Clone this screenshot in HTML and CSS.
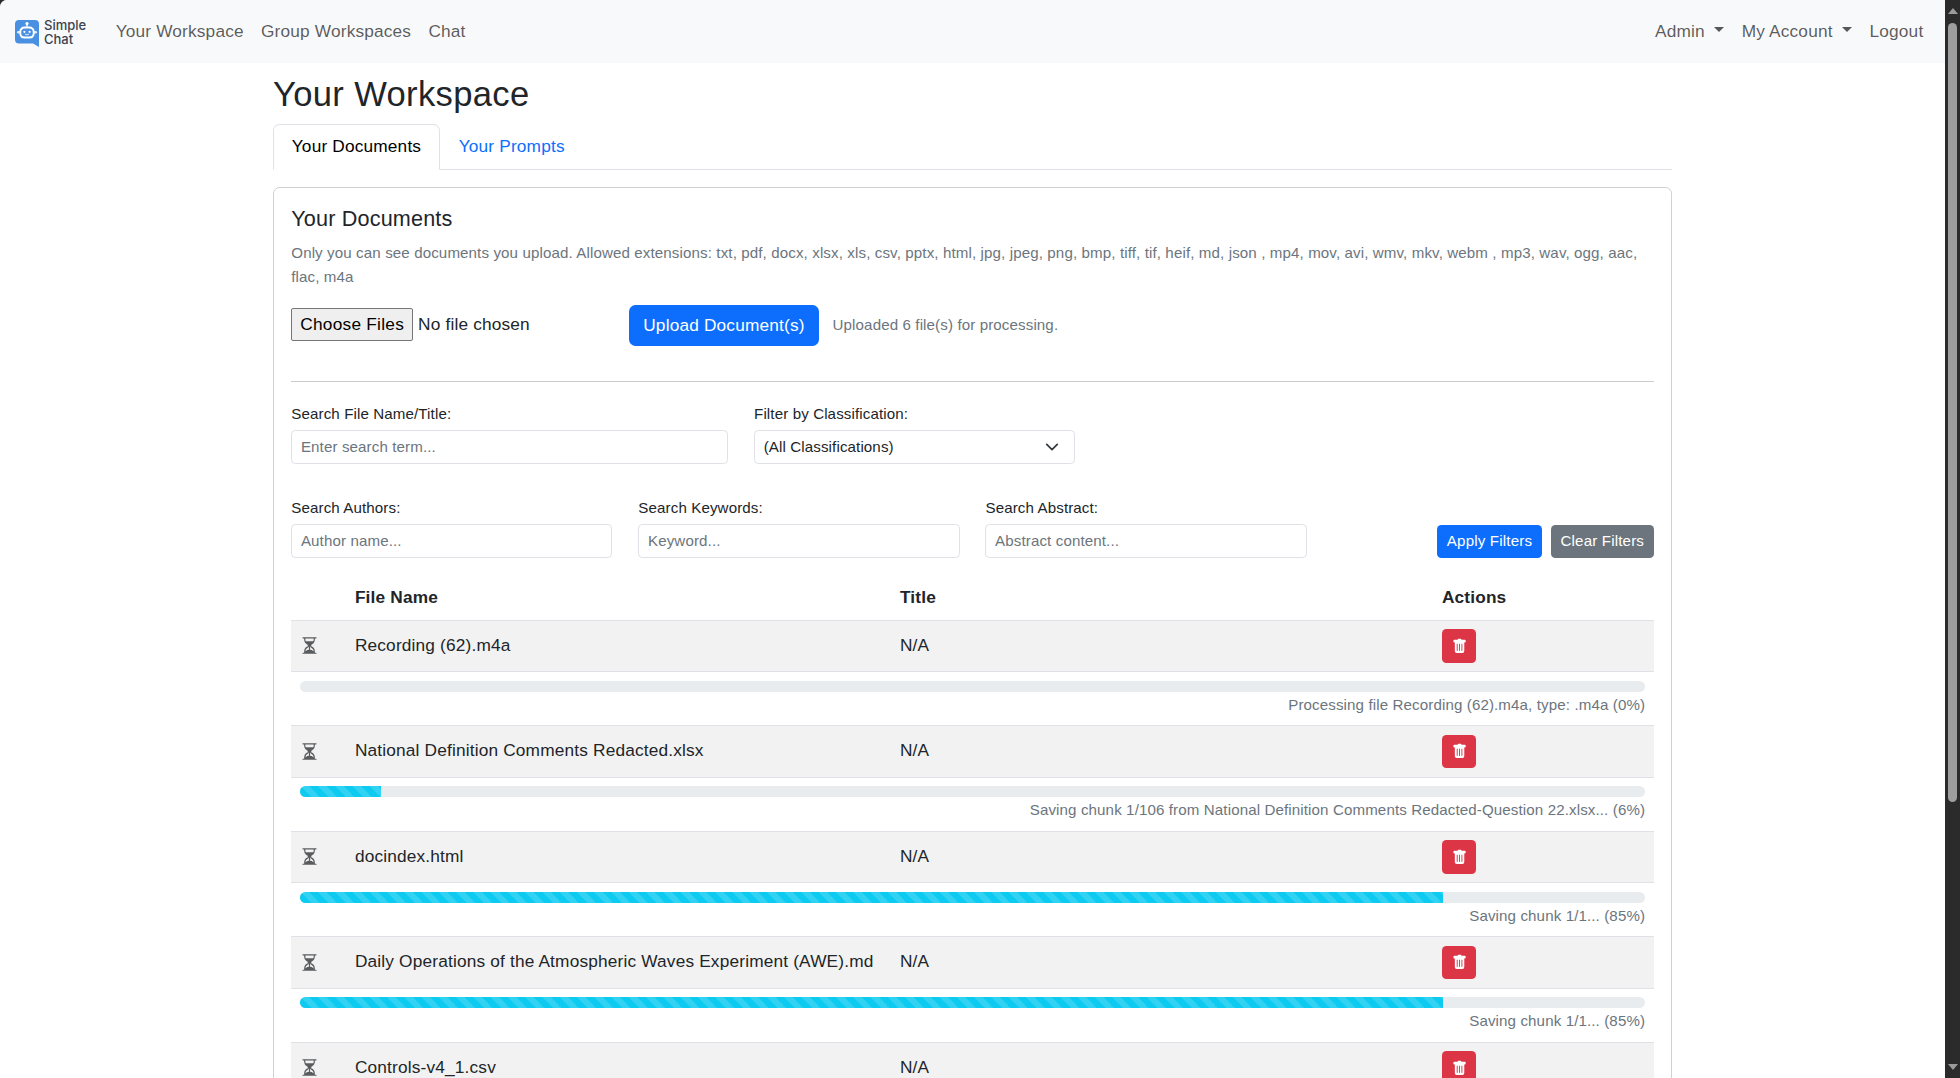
FILE: index.html
```html
<!DOCTYPE html>
<html lang="en">
<head>
    <meta charset="UTF-8">
    <meta name="viewport" content="width=device-width, initial-scale=1.0">
    <title>Your Workspace</title>
    <link rel="stylesheet" href="styles.css">
</head>
<body>
    <div class="window">
        <div class="page">
            <nav class="navbar">
                <a class="brand" href="#">
                    <svg class="brand-logo" viewBox="0 0 26 29" aria-hidden="true">
                        <path fill="#4a90e2" d="M5 1h16a4 4 0 0 1 4 4v23l-6-3.6H5a4 4 0 0 1-4-4V5a4 4 0 0 1 4-4z"/>
                        <circle cx="13" cy="4.6" r="1.6" fill="#fff"/>
                        <rect x="12.4" y="5" width="1.2" height="3" fill="#fff"/>
                        <rect x="3" y="12" width="20" height="2.4" rx="1.2" fill="#fff" opacity=".8" />
                        <rect x="5.4" y="7.6" width="15.2" height="12" rx="5" fill="#fff"/>
                        <rect x="7.2" y="9.6" width="11.6" height="8" rx="3.6" fill="#4a90e2"/>
                        <circle cx="10.4" cy="12.8" r="1.1" fill="#fff"/>
                        <circle cx="15.6" cy="12.8" r="1.1" fill="#fff"/>
                        <path d="M11.2 15.2c.9.8 2.7.8 3.6 0" fill="none" stroke="#fff" stroke-width=".8" stroke-linecap="round"/>
                    </svg>
                    <span class="brand-name">Simple<br>Chat</span>
                </a>
                <ul class="nav-list">
                    <li><a class="nav-link" href="#">Your Workspace</a></li>
                    <li><a class="nav-link" href="#">Group Workspaces</a></li>
                    <li><a class="nav-link" href="#">Chat</a></li>
                </ul>
                <ul class="nav-list nav-right">
                    <li><a class="nav-link caret" href="#">Admin</a></li>
                    <li><a class="nav-link caret" href="#">My Account</a></li>
                    <li><a class="nav-link" href="#">Logout</a></li>
                </ul>
            </nav>

            <main class="container">
                <h2 class="page-title">Your Workspace</h2>
                <ul class="tabs">
                    <li><a class="tab active" href="#">Your Documents</a></li>
                    <li><a class="tab" href="#">Your Prompts</a></li>
                </ul>

                <section class="card">
                    <h5 class="card-title">Your Documents</h5>
                    <p class="muted-note">Only you can see documents you upload. Allowed extensions: txt, pdf, docx, xlsx, xls, csv, pptx, html, jpg, jpeg, png, bmp, tiff, tif, heif, md, json , mp4, mov, avi, wmv, mkv, webm , mp3, wav, ogg, aac, flac, m4a</p>

                    <div class="upload-row">
                        <input class="file-input" type="file" multiple>
                        <button class="btn btn-primary">Upload Document(s)</button>
                        <span class="upload-status">Uploaded 6 file(s) for processing.</span>
                    </div>

                    <hr class="divider">

                    <div class="filters">
                        <div class="field span-4">
                            <label class="field-label">Search File Name/Title:</label>
                            <input class="field-input" type="text" placeholder="Enter search term...">
                        </div>
                        <div class="field span-3">
                            <label class="field-label">Filter by Classification:</label>
                            <div class="field-input select-box">(All Classifications)
                                <svg class="select-arrow" viewBox="0 0 16 16"><path fill="none" stroke="#343a40" stroke-linecap="round" stroke-linejoin="round" stroke-width="2" d="m2 5 6 6 6-6"/></svg>
                            </div>
                        </div>
                    </div>

                    <div class="filters filters-second">
                        <div class="field span-3">
                            <label class="field-label">Search Authors:</label>
                            <input class="field-input" type="text" placeholder="Author name...">
                        </div>
                        <div class="field span-3">
                            <label class="field-label">Search Keywords:</label>
                            <input class="field-input" type="text" placeholder="Keyword...">
                        </div>
                        <div class="field span-3">
                            <label class="field-label">Search Abstract:</label>
                            <input class="field-input" type="text" placeholder="Abstract content...">
                        </div>
                        <div class="filter-actions span-3">
                            <button class="btn btn-sm btn-primary">Apply Filters</button>
                            <button class="btn btn-sm btn-secondary">Clear Filters</button>
                        </div>
                    </div>

                    <table class="doc-table">
                        <colgroup>
                            <col class="col-icon">
                            <col class="col-name">
                            <col class="col-title">
                            <col>
                        </colgroup>
                        <thead>
                            <tr><th></th><th>File Name</th><th>Title</th><th>Actions</th></tr>
                        </thead>
                        <tbody id="docRows"></tbody>
                    </table>
                </section>
            </main>
        </div>

        <aside class="scrollbar">
            <span class="scroll-up"></span>
            <span class="scroll-thumb"></span>
            <span class="scroll-down"></span>
        </aside>
    </div>

    <script>
        const docs = [
            { name: "Recording (62).m4a", pct: 0, status: "Processing file Recording (62).m4a, type: .m4a" },
            { name: "National Definition Comments Redacted.xlsx", pct: 6, status: "Saving chunk 1/106 from National Definition Comments Redacted-Question 22.xlsx..." },
            { name: "docindex.html", pct: 85, status: "Saving chunk 1/1..." },
            { name: "Daily Operations of the Atmospheric Waves Experiment (AWE).md", pct: 85, status: "Saving chunk 1/1..." },
            { name: "Controls-v4_1.csv", pct: 85, status: "Saving chunk 1/1..." }
        ];

        const hourglass = '<svg class="row-icon" viewBox="0 0 16 16"><path fill="currentColor" d="M2.5 15a.5.5 0 1 1 0-1h1v-1a4.5 4.5 0 0 1 2.557-4.06c.29-.139.443-.377.443-.59v-.7c0-.213-.154-.451-.443-.59A4.5 4.5 0 0 1 3.5 3V2h-1a.5.5 0 0 1 0-1h11a.5.5 0 0 1 0 1h-1v1a4.5 4.5 0 0 1-2.557 4.06c-.29.139-.443.377-.443.59v.7c0 .213.154.451.443.59A4.5 4.5 0 0 1 12.5 13v1h1a.5.5 0 0 1 0 1zm2-13v1c0 .537.12 1.045.337 1.5h6.326c.216-.455.337-.963.337-1.5V2zm3 6.35c0 .701-.478 1.236-1.011 1.492A3.5 3.5 0 0 0 4.5 13s.866-1.299 3-1.48zm1 0v3.17c2.134.181 3 1.48 3 1.48a3.5 3.5 0 0 0-1.989-3.158C8.978 9.586 8.5 9.052 8.5 8.351z"/></svg>';
        const trash = '<svg class="trash-icon" viewBox="0 0 16 16"><path fill="currentColor" d="M2.5 1a1 1 0 0 0-1 1v1a1 1 0 0 0 1 1H3v9a2 2 0 0 0 2 2h6a2 2 0 0 0 2-2V4h.5a1 1 0 0 0 1-1V2a1 1 0 0 0-1-1H10a1 1 0 0 0-1-1H7a1 1 0 0 0-1 1zm3 4a.5.5 0 0 1 .5.5v7a.5.5 0 0 1-1 0v-7a.5.5 0 0 1 .5-.5M8 5a.5.5 0 0 1 .5.5v7a.5.5 0 0 1-1 0v-7A.5.5 0 0 1 8 5m3 .5v7a.5.5 0 0 1-1 0v-7a.5.5 0 0 1 1 0"/></svg>';

        document.getElementById('docRows').innerHTML = docs.map(doc => `
            <tr class="doc-row">
                <td>${hourglass}</td>
                <td>${doc.name}</td>
                <td>N/A</td>
                <td><button class="btn btn-sm btn-danger">${trash}</button></td>
            </tr>
            <tr class="progress-row">
                <td colspan="4">
                    <div class="progress"><div class="progress-bar" style="width:${doc.pct}%"></div></div>
                    <div class="progress-text">${doc.status} (${doc.pct}%)</div>
                </td>
            </tr>`).join('');
    </script>
</body>
</html>
```

FILE: styles.css
```css
/* the app is bootstrap-sized on a 108% page, so rem = 17.28px */
html {
    font-size: 17.28px;
}

* {
    box-sizing: border-box;
}

body {
    margin: 0;
    height: 1078px;
    overflow: hidden;
    font-family: "Liberation Sans", Arial, sans-serif;
    font-size: 1rem;
    line-height: 1.5;
    letter-spacing: .17px;
    color: #212529;
    background: #2b2b2b;
}

a {
    text-decoration: none;
}

ul {
    list-style: none;
    margin: 0;
    padding: 0;
}

.window {
    display: flex;
    height: 100%;
}

.page {
    flex: 1;
    min-width: 0;
    overflow: hidden;
    background: #fff;
    border-top-left-radius: 7px;
}

/* navbar */
.navbar {
    display: flex;
    align-items: center;
    height: 63px;
    padding: 0 13px 0 14px;
    background: #f8f9fa;
}

.brand {
    display: flex;
    align-items: center;
    gap: 4px;
    width: 93px;
    color: #3c4350;
}

.brand-logo {
    width: 26px;
    height: 29px;
    margin-top: 3px;
}

.brand-name {
    font-family: Inter, "Noto Sans", sans-serif;
    font-size: 13px;
    font-weight: 500;
    line-height: 14px;
    letter-spacing: 0;
}

.nav-list {
    display: flex;
}

.nav-right {
    margin-left: auto;
}

.nav-link {
    display: block;
    padding: .5rem;
    color: rgba(0, 0, 0, .65);
}

.caret::after {
    content: "";
    display: inline-block;
    margin-left: calc(.5rem + 1px);
    vertical-align: .255em;
    border-top: .3em solid;
    border-right: .3em solid transparent;
    border-left: .3em solid transparent;
}

/* main column */
.container {
    width: 1399px;
    margin: 0 auto;
}

.page-title {
    height: 61px;
    margin: 0;
    padding-top: 11px;
    font-size: 2rem;
    font-weight: 400;
    line-height: 1.2;
    letter-spacing: .35px;
}

.tabs {
    display: flex;
    border-bottom: 1px solid #dee2e6;
}

.tabs li {
    margin-bottom: -1px;
}

.tab {
    display: block;
    padding: calc(.5rem + .5px) calc(1rem + .5px);
    border: 1px solid transparent;
    border-radius: .375rem .375rem 0 0;
    color: #0d6efd;
}

.tab.active {
    color: #000;
    background: #fff;
    border-color: #dee2e6 #dee2e6 #fff;
}

.card {
    margin-top: 1rem;
    padding: 1rem;
    border: 1px solid rgba(0, 0, 0, .175);
    border-radius: .375rem;
}

.card-title {
    margin: 0 0 calc(.5rem + 1px);
    font-size: 1.25rem;
    font-weight: 400;
    line-height: 1.2;
}

.muted-note {
    margin: 0;
    font-size: .875rem;
    letter-spacing: .115px;
    color: #6c757d;
    line-height: 1.55;
}

.upload-row {
    display: flex;
    align-items: center;
    margin-top: 1rem;
}

.file-input {
    width: 338px;
    margin-top: -2px;
    font-family: inherit;
    font-size: 1rem;
    letter-spacing: inherit;
}

.file-input::file-selector-button {
    height: 33px;
    padding: 0 8px;
    margin-right: 5px;
    font: inherit;
    letter-spacing: .25px;
    border: 1px solid #767676;
    border-radius: 2px;
    background: #efefef;
}

.upload-status {
    margin-left: 14px;
    font-size: .875rem;
    letter-spacing: .115px;
    color: #6c757d;
}

.divider {
    margin: 35px 0 21px;
    border: 0;
    border-top: 1px solid #ccc;
}

.btn {
    padding: .375rem .75rem;
    border: 1px solid transparent;
    border-radius: .375rem;
    font-family: inherit;
    font-size: 1rem;
    line-height: 1.5;
    letter-spacing: inherit;
    color: #fff;
}

.btn-sm {
    padding: .25rem .5rem;
    font-size: .875rem;
    border-radius: .25rem;
}

.btn-primary {
    background: #0d6efd;
}

.btn-secondary {
    background: #6c757d;
}

.btn-danger {
    display: flex;
    align-items: center;
    background: #dc3545;
}

/* filter rows sit on bootstrap's 12 columns */
.filters {
    display: grid;
    grid-template-columns: repeat(12, 1fr);
    column-gap: 1.5rem;
}

.filters-second {
    margin-top: 33px;
}

.span-3 {
    grid-column: span 3;
}

.span-4 {
    grid-column: span 4;
}

.field-label {
    display: block;
    margin-bottom: .25rem;
    font-size: .875rem;
    letter-spacing: .115px;
}

.field-input {
    display: block;
    width: 100%;
    min-height: 34px;
    padding: .25rem .5rem;
    border: 1px solid #dee2e6;
    border-radius: .25rem;
    font-family: inherit;
    font-size: .875rem;
    line-height: 1.5;
    letter-spacing: .115px;
    color: #212529;
    background: #fff;
}

.field-input::placeholder {
    color: #6c757d;
}

.select-box {
    position: relative;
}

.select-arrow {
    position: absolute;
    top: 9px;
    right: 15px;
    width: 14px;
    height: 14px;
}

.filter-actions {
    display: flex;
    justify-content: flex-end;
    align-items: flex-end;
    gap: 9px;
}

/* documents table */
.doc-table {
    width: 100%;
    margin-top: calc(1rem + 1px);
    border-collapse: collapse;
    table-layout: fixed;
}

.col-icon {
    width: 55px;
}

.col-name {
    width: 545px;
}

.col-title {
    width: 542px;
}

.doc-table th {
    padding: .5rem;
    text-align: left;
    font-weight: 700;
    border-bottom: 1px solid #dee2e6;
}

.doc-row td {
    padding: .5rem;
    background: #f2f2f2;
    border-bottom: 1px solid #dee2e6;
    vertical-align: middle;
}

.progress-row td {
    padding: .5rem;
    border-bottom: 1px solid #dee2e6;
}

.row-icon {
    display: block;
    width: 19px;
    height: 19px;
    color: #595c5f;
}

.trash-icon {
    display: block;
    width: 1em;
    height: 1.5em;
}

.progress {
    height: 11px;
    overflow: hidden;
    border-radius: .375rem;
    background: #e9ecef;
}

.progress-bar {
    height: 100%;
    background-color: #0dcaf0;
    background-image: linear-gradient(45deg, rgba(255, 255, 255, .15) 25%, transparent 25%, transparent 50%, rgba(255, 255, 255, .15) 50%, rgba(255, 255, 255, .15) 75%, transparent 75%, transparent);
    background-size: 1rem 1rem;
}

.progress-text {
    margin-top: 2px;
    text-align: right;
    font-size: .875rem;
    letter-spacing: .115px;
    line-height: 1.5;
    color: #6c757d;
}

/* drawn scrollbar, the shot shows the browser's own */
.scrollbar {
    display: flex;
    flex-direction: column;
    align-items: center;
    width: 15px;
    background: #2b2b2b;
}

.scroll-up,
.scroll-down {
    width: 0;
    height: 0;
    border-left: 5px solid transparent;
    border-right: 5px solid transparent;
}

.scroll-up {
    margin-top: 8px;
    border-bottom: 6px solid #9b9b9b;
}

.scroll-down {
    margin: auto 0 8px;
    border-top: 6px solid #9b9b9b;
}

.scroll-thumb {
    width: 9px;
    height: 779px;
    margin-top: 9px;
    border-radius: 5px;
    background: #9e9e9e;
}
```
